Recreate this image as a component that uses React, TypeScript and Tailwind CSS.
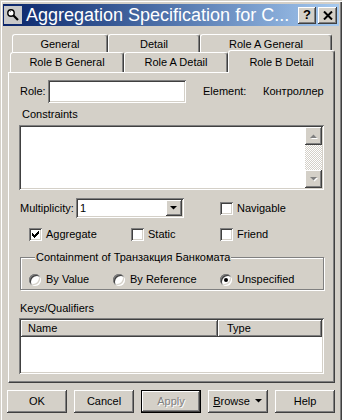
import React from 'react';

const RAISED =
  'bg-[#d4d0c8] shadow-[inset_-1px_-1px_#404040,inset_1px_1px_#ffffff,inset_-2px_-2px_#808080]';
const SUNKEN =
  'bg-white shadow-[inset_1px_1px_#808080,inset_-1px_-1px_#ffffff,inset_2px_2px_#404040,inset_-2px_-2px_#d4d0c8]';

function Check() {
  const cols = [2, 3, 4, 3, 2, 1, 0];
  return (
    <svg width="7" height="7" viewBox="0 0 7 7" shapeRendering="crispEdges">
      {cols.map((y, x) => (
        <rect key={x} x={x} y={y} width="1" height="3" fill="#000" />
      ))}
    </svg>
  );
}

function CheckBox({ checked, label, w }: { checked?: boolean; label: string; w?: string }) {
  return (
    <div className={`flex items-center ${w ?? ''}`}>
      <span className={`w-[13px] h-[13px] shrink-0 flex items-center justify-center ${SUNKEN}`}>
        {checked && <Check />}
      </span>
      <span className="ml-[4px]">{label}</span>
    </div>
  );
}

function Radio({ checked, label, w }: { checked?: boolean; label: string; w?: string }) {
  return (
    <div className={`flex items-center ${w ?? ''}`}>
      <span
        className={`w-[12px] h-[12px] shrink-0 rounded-full flex items-center justify-center ${SUNKEN}`}
      >
        {checked && <span className="w-[4px] h-[4px] rounded-full bg-black" />}
      </span>
      <span className="ml-[5px]">{label}</span>
    </div>
  );
}

function Arrow({ up, grey }: { up?: boolean; grey?: boolean }) {
  const d = up ? 'M0 4 L3.5 0.5 L7 4 Z' : 'M0 0 L7 0 L3.5 3.5 Z';
  return (
    <svg width="8" height="5" viewBox="0 0 8 5">
      {grey && <path d={d} fill="#ffffff" transform="translate(1 1)" />}
      <path d={d} fill={grey ? '#808080' : '#000'} />
    </svg>
  );
}

function Tab({ label, w, selected }: { label: string; w: string; selected?: boolean }) {
  return (
    <div
      className={`${w} ${
        selected ? 'relative z-10 -mt-[2px] h-[23px] pt-[4px]' : 'h-full pt-[2px]'
      } bg-[#d4d0c8] border-t border-l border-white border-r border-r-[#404040] rounded-t-[3px] shadow-[inset_-1px_0_#808080] text-center leading-[14px]`}
    >
      {label}
    </div>
  );
}

function Button({ children, def }: { children: React.ReactNode; def?: boolean }) {
  return (
    <div
      className={`w-[60px] h-[23px] flex items-center justify-center ${
        def
          ? 'bg-[#d4d0c8] shadow-[inset_0_0_0_1px_#000,inset_-2px_-2px_#404040,inset_2px_2px_#ffffff,inset_-3px_-3px_#808080]'
          : RAISED
      }`}
    >
      {children}
    </div>
  );
}

export default function App() {
  return (
    <div
      className="w-[342px] h-[420px] bg-[#d4d0c8] overflow-hidden text-[11px] text-black shadow-[inset_1px_1px_#d4d0c8,inset_2px_2px_#ffffff,inset_-1px_0_#404040,inset_-2px_0_#808080]"
      style={{ fontFamily: '"Liberation Sans", Arial, sans-serif' }}
    >
      {/* title bar */}
      <div className="mx-[3px] mt-[4px] h-[22px] flex items-center bg-gradient-to-r from-[#0a246a] to-[#a6caf0]">
        <div className="ml-[1px] w-[18px] h-[18px] bg-[#c8c8c8] flex items-center justify-center">
          <svg width="14" height="14" viewBox="0 0 14 14">
            <circle cx="5" cy="5" r="3.2" fill="#ffffff" stroke="#000" strokeWidth="1.4" />
            <path d="M7.5 7.5 L12 12" stroke="#000" strokeWidth="2.2" />
            <path d="M3.8 4 L5 3.2" stroke="#808080" strokeWidth="1" />
          </svg>
        </div>
        <span className="ml-[4px] text-[18px] leading-[22px] text-white whitespace-nowrap">
          Aggregation Specification for C...
        </span>
        <div className="ml-auto mr-[2px] flex gap-[2px]">
          <div className={`w-[18px] h-[17px] flex items-center justify-center font-bold text-[13px] ${RAISED}`}>
            ?
          </div>
          <div className={`w-[19px] h-[17px] flex items-center justify-center ${RAISED}`}>
            <svg width="10" height="9" viewBox="0 0 10 9">
              <path d="M1 0.5 L9 8.5 M9 0.5 L1 8.5" stroke="#000" strokeWidth="2" />
            </svg>
          </div>
        </div>
      </div>

      {/* tabs */}
      <div className="mt-[8px] pl-[12px] flex h-[18px]">
        <Tab label="General" w="w-[96px]" />
        <Tab label="Detail" w="w-[92px]" />
        <Tab label="Role A General" w="w-[132px]" />
      </div>
      <div className="pl-[10px] flex h-[20px]">
        <Tab label="Role B General" w="w-[114px]" />
        <Tab label="Role A Detail" w="w-[104px]" />
        <Tab label="Role B Detail" w="w-[107px]" selected />
      </div>

      {/* panel */}
      <div className="ml-[8px] w-[327px] h-[311px] border-t border-l border-white border-r border-b border-r-[#404040] border-b-[#404040] shadow-[inset_-1px_-1px_#808080] pl-[10px] pr-[10px] pt-[7px] flex flex-col">
        <div className="flex items-center h-[23px]">
          <span className="w-[29px] pl-[1px]">Role:</span>
          <div className={`w-[138px] h-[23px] ${SUNKEN}`} />
          <span className="ml-[17px] w-[60px]">Element:</span>
          <span>Контроллер</span>
        </div>

        <div className="mt-[4px] h-[14px] leading-[14px] pl-[3px]">Constraints</div>
        <div className={`mt-[4px] h-[65px] flex ${SUNKEN}`}>
          <div className="flex-1" />
          <div className="w-[17px] my-[2px] mr-[2px] flex flex-col">
            <div className={`h-[18px] flex items-center justify-center ${RAISED}`}>
              <Arrow up grey />
            </div>
            <div className="flex-1 bg-[repeating-conic-gradient(#d4d0c8_0%_25%,#ffffff_0%_50%)] bg-[length:2px_2px]" />
            <div className={`h-[18px] flex items-center justify-center ${RAISED}`}>
              <Arrow grey />
            </div>
          </div>
        </div>

        <div className="mt-[8px] flex items-center h-[20px]">
          <span className="w-[57px] pl-[1px]">Multiplicity:</span>
          <div className={`w-[108px] h-[20px] flex items-center ${SUNKEN}`}>
            <span className="pl-[4px] flex-1">1</span>
            <div className={`w-[16px] h-[16px] mr-[2px] flex items-center justify-center ${RAISED}`}>
              <Arrow />
            </div>
          </div>
          <div className="ml-[36px]">
            <CheckBox label="Navigable" />
          </div>
        </div>

        <div className="mt-[10px] pl-[10px] flex items-center h-[13px]">
          <CheckBox checked label="Aggregate" w="w-[102px]" />
          <CheckBox label="Static" w="w-[89px]" />
          <CheckBox label="Friend" />
        </div>

        <fieldset className="mt-[9px] ml-[1px] w-[304px] h-[40px] border border-[#808080] shadow-[inset_1px_1px_#ffffff,1px_1px_#ffffff] pl-[8px]">
          <legend className="ml-[6px] px-[1px] bg-[#d4d0c8] leading-[14px]">
            Containment of Транзакция Банкомата
          </legend>
          <div className="mt-[9px] flex items-center h-[13px]">
            <Radio label="By Value" w="w-[84px]" />
            <Radio label="By Reference" w="w-[107px]" />
            <Radio checked label="Unspecified" />
          </div>
        </fieldset>

        <div className="mt-[11px] h-[14px] leading-[14px] pl-[1px]">Keys/Qualifiers</div>
        <div className={`mt-[3px] h-[56px] p-[2px] ${SUNKEN}`}>
          <div className="flex h-[17px]">
            <div className={`w-[197px] h-full pl-[7px] leading-[17px] ${RAISED}`}>Name</div>
            <div className={`flex-1 h-full pl-[9px] leading-[17px] ${RAISED}`}>Type</div>
          </div>
        </div>
      </div>

      {/* buttons */}
      <div className="mt-[7px] pl-[7px] flex gap-[7px]">
        <Button>OK</Button>
        <Button>Cancel</Button>
        <Button def>
          <span className="text-[#808080] [text-shadow:1px_1px_#ffffff]">Apply</span>
        </Button>
        <Button>
          <span>
            <span className="underline">B</span>rowse
          </span>
          <span className="ml-[5px]">
            <Arrow />
          </span>
        </Button>
        <Button>Help</Button>
      </div>
    </div>
  );
}
